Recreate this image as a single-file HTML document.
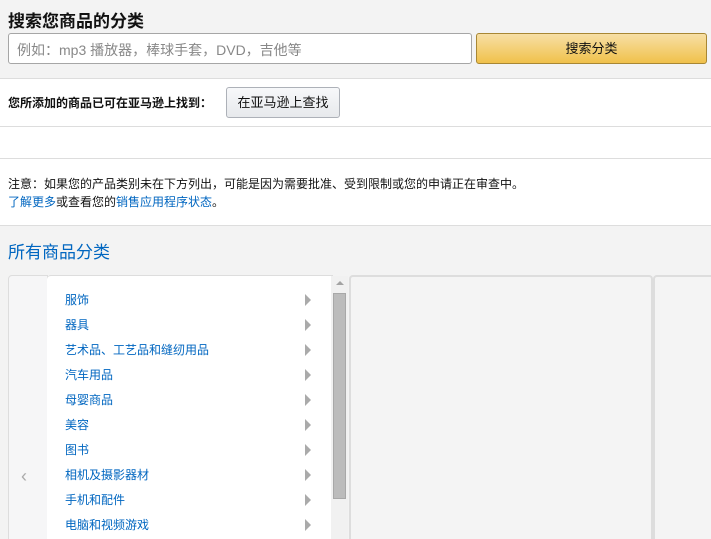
<!DOCTYPE html>
<html><head><meta charset="utf-8"><style>
*{margin:0;padding:0;box-sizing:border-box}
html,body{width:711px;height:539px;overflow:hidden}
body{background:#f3f3f3;font-family:"Liberation Sans","Noto Sans CJK SC",sans-serif;position:relative;color:#111}
.abs{position:absolute}
h1{position:absolute;left:8px;top:7px;font-size:17px;font-weight:bold;color:#111}
.inp{left:8px;top:33px;width:464px;height:31px;background:#fff;border:1px solid #a6a6a6;border-radius:3px;font-size:14px;color:#888;padding:6px 0 0 8px}
.btn{left:476px;top:33px;width:231px;height:31px;border:1px solid #a88734;border-radius:3px;background:linear-gradient(#f7dfa5,#f0c14b);font-size:13px;text-align:center;line-height:29px;color:#111}
.white{left:0;width:711px;background:#fff;border-top:1px solid #ddd}
.fb{left:226px;top:87px;width:114px;height:31px;border:1px solid #adb1b8;border-radius:3px;background:linear-gradient(#f7f8fa,#e7e9ec);font-size:13px;text-align:center;line-height:29px}
a{color:#0066c0;text-decoration:none}
.row{position:absolute;left:18px;font-size:12px;color:#0066c0;width:250px}
.row:after{content:"";position:absolute;left:240px;top:3px;border-left:6px solid #aaa;border-top:6px solid transparent;border-bottom:6px solid transparent}
</style></head><body>
<h1>搜索您商品的分类</h1>
<div class="abs inp">例如：mp3 播放器，棒球手套，DVD，吉他等</div>
<div class="abs btn">搜索分类</div>
<div class="abs white" style="top:78px;height:48px"></div>
<div class="abs" style="left:8px;top:94px;font-size:12px;font-weight:bold">您所添加的商品已可在亚马逊上找到：</div>
<div class="abs fb">在亚马逊上查找</div>
<div class="abs white" style="top:126px;height:32px"></div>
<div class="abs white" style="top:158px;height:68px;border-bottom:1px solid #ddd"></div>
<div class="abs" style="left:8px;top:175px;font-size:12px;line-height:18px">注意：如果您的产品类别未在下方列出，可能是因为需要批准、受到限制或您的申请正在审查中。<br><a>了解更多</a>或查看您的<a>销售应用程序状态</a>。</div>
<div class="abs" style="left:8px;top:238px;font-size:17px;color:#0066c0">所有商品分类</div>
<div class="abs" style="left:8px;top:275px;width:40px;height:270px;background:#f6f6f7;border:1px solid #ddd;border-radius:4px 0 0 0"></div>
<div class="abs" style="left:21px;top:466px;color:#aaa;font-size:18px">‹</div>
<div class="abs" style="left:47px;top:275px;width:286px;height:270px;background:#fff;border-top:1px solid #ddd;border-radius:4px 0 0 0">
<div class="row" style="top:15px">服饰</div>
<div class="row" style="top:40px">器具</div>
<div class="row" style="top:65px">艺术品、工艺品和缝纫用品</div>
<div class="row" style="top:90px">汽车用品</div>
<div class="row" style="top:115px">母婴商品</div>
<div class="row" style="top:140px">美容</div>
<div class="row" style="top:165px">图书</div>
<div class="row" style="top:190px">相机及摄影器材</div>
<div class="row" style="top:215px">手机和配件</div>
<div class="row" style="top:240px">电脑和视频游戏</div>
</div>
<div class="abs" style="left:331px;top:276px;width:17px;height:270px;background:#f1f1f1"></div>
<div class="abs" style="left:336px;top:281px;border-bottom:4px solid #a3a3a3;border-left:4px solid transparent;border-right:4px solid transparent"></div>
<div class="abs" style="left:333px;top:293px;width:13px;height:206px;background:#bcbcbc;border:1px solid #a8a8a8"></div>
<div class="abs" style="left:349px;top:275px;width:304px;height:270px;background:#f4f4f4;border:2px solid #ddd;border-bottom:none;border-radius:4px 4px 0 0"></div>
<div class="abs" style="left:653px;top:275px;width:70px;height:270px;background:#f4f4f4;border:2px solid #ddd;border-bottom:none;border-radius:4px 0 0 0"></div>
</body></html>
